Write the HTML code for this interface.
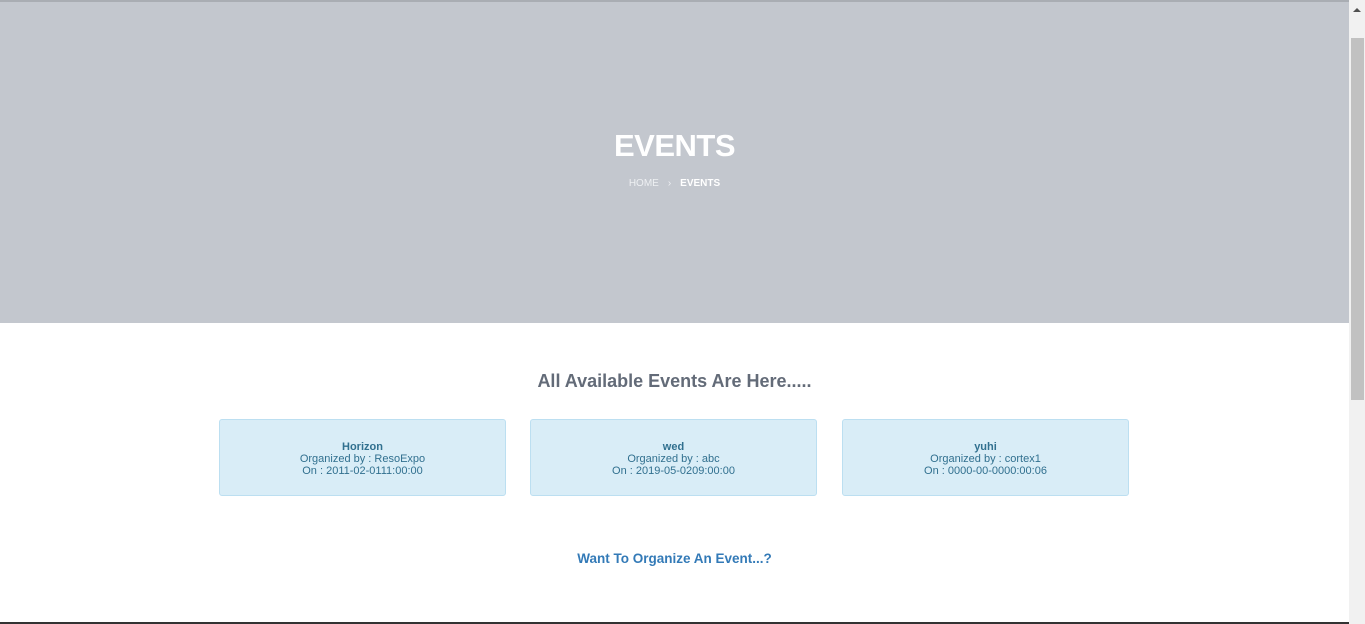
<!DOCTYPE html>
<html><head><meta charset="utf-8"><style>
*{margin:0;padding:0;box-sizing:border-box}
body{width:1365px;height:624px;overflow:hidden;background:#fff;font-family:"Liberation Sans",Arial,sans-serif;position:relative}
.hero{position:absolute;left:0;top:0;width:1349px;height:323px;background:#c3c7ce;border-top:2px solid #a9adb3}
.hero h1{position:absolute;top:126px;left:0;width:1349px;text-align:center;color:#fff;font-size:31px;font-weight:bold;letter-spacing:-0.5px}
.bc{position:absolute;top:176px;left:0;width:1349px;text-align:center;font-size:10px;color:#eef0f3}
.bc b{color:#fff;font-weight:bold}
.bc span{margin:0 9px}
h2{position:absolute;top:371px;left:0;width:1349px;text-align:center;font-size:18px;color:#636b78;font-weight:bold}
.card{position:absolute;top:419px;width:287px;height:77px;background:#d9edf7;border:1px solid #bcdff1;border-radius:3px;text-align:center;color:#31708f;font-size:11px;line-height:12px;padding-top:21px}
.card b{display:block}
.link{position:absolute;top:551px;left:0;width:1349px;text-align:center;font-size:13.5px;color:#337ab7;font-weight:bold}
.sb{position:absolute;left:1349px;top:0;width:16px;height:624px;background:#f1f1f1}
.th{position:absolute;left:1351px;top:38px;width:13px;height:362px;background:#c1c1c1}
.ar{position:absolute;left:1353px;top:8px;width:0;height:0;border-left:4px solid transparent;border-right:4px solid transparent;border-bottom:4px solid #505050}
.bl{position:absolute;left:0;top:622px;width:1349px;height:2px;background:#333}
</style></head><body>
<div class="hero"><h1>EVENTS</h1><div class="bc">HOME<span>›</span><b>EVENTS</b></div></div>
<h2>All Available Events Are Here.....</h2>
<div class="card" style="left:219px"><b>Horizon</b>Organized by : ResoExpo<br>On : 2011-02-0111:00:00</div>
<div class="card" style="left:530px"><b>wed</b>Organized by : abc<br>On : 2019-05-0209:00:00</div>
<div class="card" style="left:842px"><b>yuhi</b>Organized by : cortex1<br>On : 0000-00-0000:00:06</div>
<div class="link">Want To Organize An Event...?</div>
<div class="bl"></div>
<div class="sb"></div><div class="th"></div><div class="ar"></div>
</body></html>
